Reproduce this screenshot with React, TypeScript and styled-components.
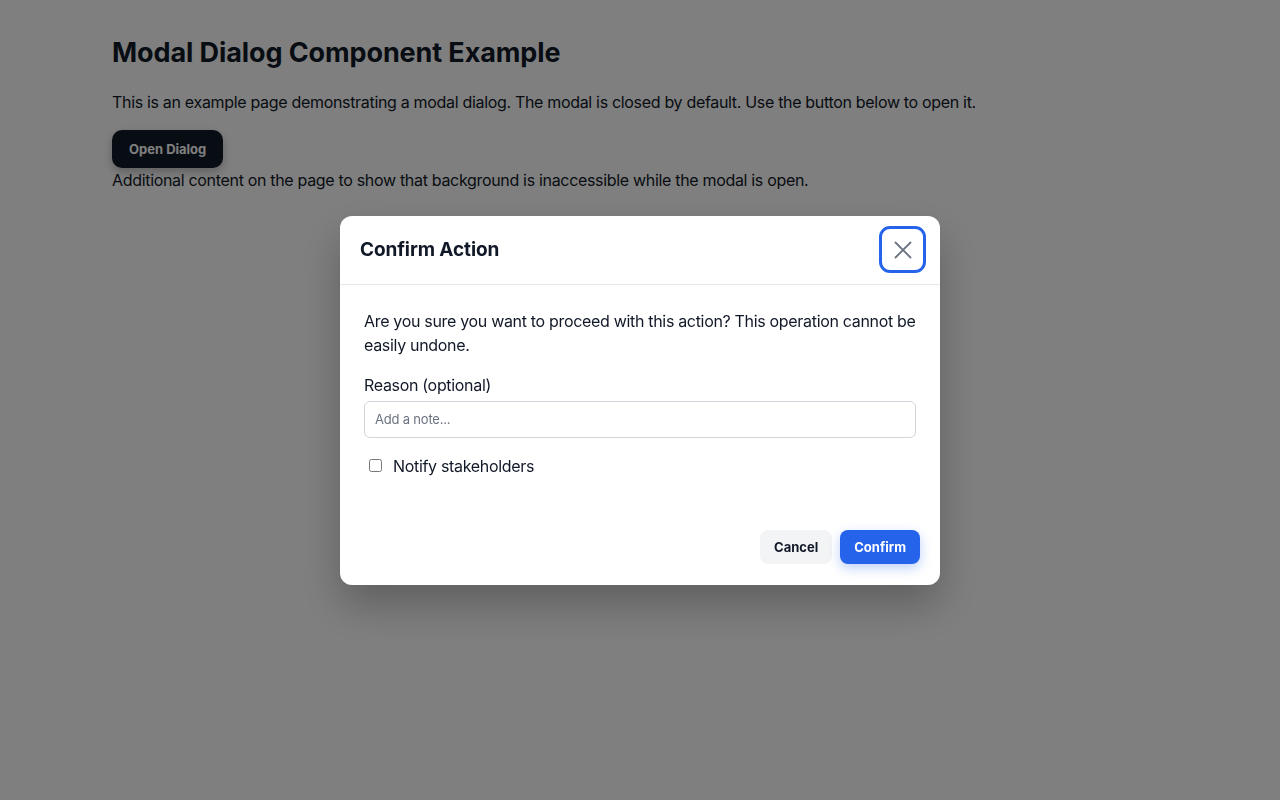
import React, { useState } from 'react';
import styled, { createGlobalStyle } from 'styled-components';

const GlobalStyle = createGlobalStyle`
  * { box-sizing: border-box; }
  html, body { margin: 0; padding: 0; background: #ffffff; }
  body {
    font-family: Inter, "Liberation Sans", Arial, sans-serif;
    color: #111827;
  }
`;

const Page = styled.main`
  max-width: 1056px;
  margin: 0 auto;
  padding-top: 35px;
`;

const Heading = styled.h1`
  margin: 0 0 19px;
  font-size: 27px;
  line-height: 36px;
  font-weight: 700;
  letter-spacing: -0.1px;
`;

const Text = styled.p`
  margin: 0;
  font-size: 16px;
  line-height: 24px;
  letter-spacing: -0.32px;
`;

const Intro = styled(Text)`
  margin-bottom: 16px;
`;

const OpenButton = styled.button`
  display: block;
  height: 38px;
  padding: 0 17px;
  border: none;
  border-radius: 10px;
  background: #111827;
  color: #ffffff;
  font-family: inherit;
  font-size: 13px;
  font-weight: 700;
  box-shadow: 0 4px 10px rgba(0, 0, 0, 0.25);
  cursor: pointer;
`;

const Overlay = styled.div`
  position: fixed;
  inset: 0;
  background: rgba(0, 0, 0, 0.5);
  display: flex;
  align-items: center;
  justify-content: center;
`;

const Dialog = styled.div`
  width: 600px;
  background: #ffffff;
  border-radius: 12px;
  box-shadow: 0 20px 40px rgba(0, 0, 0, 0.25);
  overflow: hidden;
`;

const Header = styled.header`
  display: flex;
  align-items: center;
  justify-content: space-between;
  height: 69px;
  padding: 0 14px 0 20px;
  border-bottom: 1px solid #e5e7eb;
`;

const Title = styled.h2`
  margin: 0;
  font-size: 19px;
  font-weight: 700;
  letter-spacing: -0.1px;
  color: #111827;
`;

const CloseButton = styled.button`
  width: 47px;
  height: 47px;
  display: flex;
  align-items: center;
  justify-content: center;
  background: #ffffff;
  border: 3px solid #2563eb;
  border-radius: 11px;
  color: #6b7280;
  padding: 0;
  cursor: pointer;
`;

const Body = styled.div`
  padding: 24px 24px 0;
`;

const Message = styled(Text)`
  margin-bottom: 16px;
`;

const Label = styled.label`
  display: block;
  font-size: 16px;
  line-height: 24px;
  letter-spacing: -0.32px;
  margin-bottom: 4px;
`;

const Input = styled.input`
  display: block;
  width: 100%;
  height: 37px;
  padding: 0 10px;
  border: 1px solid #d1d5db;
  border-radius: 6px;
  font-family: inherit;
  font-size: 13px;
  letter-spacing: -0.2px;
  color: #111827;
  &::placeholder { color: #6b7280; }
`;

const CheckRow = styled.label`
  display: flex;
  align-items: center;
  gap: 11px;
  margin-top: 16px;
  font-size: 16px;
  line-height: 24px;
  letter-spacing: -0.32px;
  input { margin: 0 0 0 5px; width: 13px; height: 13px; }
`;

const Footer = styled.footer`
  display: flex;
  justify-content: flex-end;
  gap: 8px;
  padding: 52px 20px 21px;
`;

const ActionButton = styled.button<{ $primary?: boolean }>`
  height: 34px;
  padding: 0 14px;
  border: none;
  border-radius: 8px;
  font-family: inherit;
  font-size: 13px;
  font-weight: 700;
  cursor: pointer;
  background: ${(p) => (p.$primary ? '#2563eb' : '#f3f4f6')};
  color: ${(p) => (p.$primary ? '#ffffff' : '#111827')};
  box-shadow: ${(p) => (p.$primary ? '0 4px 12px rgba(37, 99, 235, 0.3)' : 'none')};
`;

export default function App() {
  const [open, setOpen] = useState(true);
  return (
    <>
      <GlobalStyle />
      <Page>
        <Heading>Modal Dialog Component Example</Heading>
        <Intro>
          This is an example page demonstrating a modal dialog. The modal is closed by default. Use the button below to open it.
        </Intro>
        <OpenButton onClick={() => setOpen(true)}>Open Dialog</OpenButton>
        <Text>Additional content on the page to show that background is inaccessible while the modal is open.</Text>
      </Page>
      {open && (
        <Overlay>
          <Dialog role="dialog" aria-modal="true">
            <Header>
              <Title>Confirm Action</Title>
              <CloseButton aria-label="Close" onClick={() => setOpen(false)}>
                <svg width="24" height="24" viewBox="0 0 24 24" fill="none" stroke="currentColor" strokeWidth="1.8" strokeLinecap="round">
                  <path d="M4.5 4.5l15 15M19.5 4.5l-15 15" />
                </svg>
              </CloseButton>
            </Header>
            <Body>
              <Message>Are you sure you want to proceed with this action? This operation cannot be easily undone.</Message>
              <Label htmlFor="reason">Reason (optional)</Label>
              <Input id="reason" placeholder="Add a note..." />
              <CheckRow>
                <input type="checkbox" />
                Notify stakeholders
              </CheckRow>
            </Body>
            <Footer>
              <ActionButton onClick={() => setOpen(false)}>Cancel</ActionButton>
              <ActionButton $primary onClick={() => setOpen(false)}>Confirm</ActionButton>
            </Footer>
          </Dialog>
        </Overlay>
      )}
    </>
  );
}
